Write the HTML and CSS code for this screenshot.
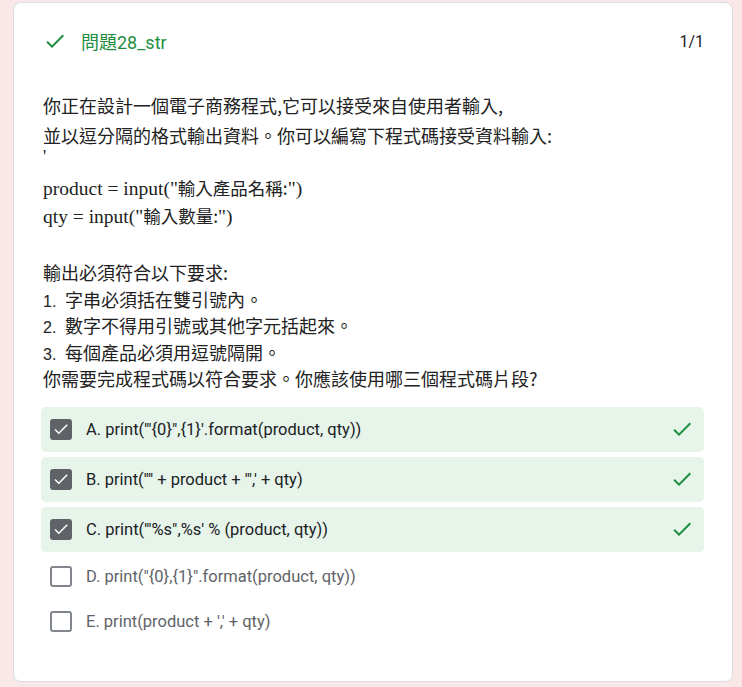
FILE: index.html
```html
<!DOCTYPE html>
<html lang="zh-Hant">
<head>
<meta charset="utf-8">
<link rel="stylesheet" href="styles.css">
</head>
<body>
<div class="card">
  <div class="header">
    <svg class="hcheck" viewBox="0 0 24 24" width="24" height="24"><path d="M9 16.17L4.83 12l-1.42 1.41L9 19 21 7l-1.41-1.41z" fill="#1e8e3e"/></svg>
    <div class="title">問題28_str</div>
    <div class="score">1/1</div>
  </div>
  <div class="question">
    <div class="l1">你正在設計一個電子商務程式,它可以接受來自使用者輸入,</div>
    <div class="l1">並以逗分隔的格式輸出資料。你可以編寫下程式碼接受資料輸入:</div>
    <div class="apos">'</div>
    <div class="code first">product = input("<span class="cjk">輸入產品名稱:</span>")</div>
    <div class="code">qty = input("<span class="cjk">輸入數量:</span>")</div>
    <div class="req first">輸出必須符合以下要求:</div>
    <div class="req"><span class="num">1.</span>字串必須括在雙引號內。</div>
    <div class="req"><span class="num">2.</span>數字不得用引號或其他字元括起來。</div>
    <div class="req"><span class="num">3.</span>每個產品必須用逗號隔開。</div>
    <div class="req">你需要完成程式碼以符合要求。你應該使用哪三個程式碼片段?</div>
  </div>
  <div class="options">
    <div class="opt correct">
      <span class="box checked"><svg viewBox="0 0 24 24" width="18" height="18"><path d="M9 16.17L4.83 12l-1.42 1.41L9 19 21 7l-1.41-1.41z" fill="#fff"/></svg></span>
      <span class="label">A. print('"{0}",{1}'.format(product, qty))</span>
      <svg class="ok" viewBox="0 0 24 24" width="24" height="24"><path d="M9 16.17L4.83 12l-1.42 1.41L9 19 21 7l-1.41-1.41z" fill="#1e8e3e"/></svg>
    </div>
    <div class="opt correct">
      <span class="box checked"><svg viewBox="0 0 24 24" width="18" height="18"><path d="M9 16.17L4.83 12l-1.42 1.41L9 19 21 7l-1.41-1.41z" fill="#fff"/></svg></span>
      <span class="label">B. print('"' + product + '",' + qty)</span>
      <svg class="ok" viewBox="0 0 24 24" width="24" height="24"><path d="M9 16.17L4.83 12l-1.42 1.41L9 19 21 7l-1.41-1.41z" fill="#1e8e3e"/></svg>
    </div>
    <div class="opt correct">
      <span class="box checked"><svg viewBox="0 0 24 24" width="18" height="18"><path d="M9 16.17L4.83 12l-1.42 1.41L9 19 21 7l-1.41-1.41z" fill="#fff"/></svg></span>
      <span class="label">C. print('"%s",%s' % (product, qty))</span>
      <svg class="ok" viewBox="0 0 24 24" width="24" height="24"><path d="M9 16.17L4.83 12l-1.42 1.41L9 19 21 7l-1.41-1.41z" fill="#1e8e3e"/></svg>
    </div>
    <div class="opt plain">
      <span class="box"></span>
      <span class="label">D. print("{0},{1}".format(product, qty))</span>
    </div>
    <div class="opt plain">
      <span class="box"></span>
      <span class="label">E. print(product + ',' + qty)</span>
    </div>
  </div>
</div>
</body>
</html>
```

FILE: styles.css
```css
html, body {
  margin: 0;
  padding: 0;
}
body {
  background: #fae8e8;
  font-family: Roboto, "Noto Sans CJK TC", sans-serif;
  color: #202124;
}
.card {
  box-sizing: border-box;
  margin: 2px 0 0 13px;
  width: 720px;
  height: 680px;
  background: #fff;
  border: 1px solid #dadce0;
  border-radius: 8px;
  padding: 20px 28px 0 27px;
}
.header {
  display: flex;
  align-items: center;
  height: 36px;
  padding-left: 2px;
}
.hcheck {
  flex: none;
}
.title {
  margin-left: 14px;
  font-size: 18px;
  color: #1e8e3e;
  flex: 1;
}
.score {
  font-size: 16px;
  color: #202124;
  margin-right: 0;
}
.question {
  margin-top: 31px;
  padding-left: 2px;
  font-family: "Noto Sans CJK TC", sans-serif;
  font-size: 18px;
  color: #222;
}
.l1 {
  line-height: 30px;
  height: 30px;
  white-space: nowrap;
}
.apos {
  line-height: 14px;
  height: 20px;
  font-family: "Liberation Serif", serif;
}
.code {
  font-family: "Liberation Serif", "Noto Sans CJK TC", serif;
  font-size: 19.5px;
  line-height: 28px;
  height: 28px;
}
.code.first {
  margin-top: 4px;
}
.cjk {
  font-family: "Noto Sans CJK TC", sans-serif;
  font-size: 17.5px;
}
.req {
  line-height: 26.5px;
  height: 26.5px;
  white-space: nowrap;
}
.req.first {
  margin-top: 29px;
}
.num {
  display: inline-block;
  width: 20px;
  margin-right: 2px;
  font-family: "Liberation Sans", sans-serif;
  font-size: 16px;
}
.options {
  margin-top: 15px;
  display: flex;
  flex-direction: column;
  gap: 5px;
}
.opt {
  display: flex;
  align-items: center;
  height: 45px;
  padding: 0 10px 0 9px;
  border-radius: 5px;
}
.opt.correct {
  background: #e6f4ea;
}
.opt.plain {
  height: 40px;
  color: #5f6368;
}
.box {
  box-sizing: border-box;
  flex: none;
  width: 22px;
  height: 21px;
  border-radius: 3px;
  border: 2px solid #80868b;
  display: flex;
  align-items: center;
  justify-content: center;
}
.box.checked {
  background: #5f6368;
  border-color: #5f6368;
}
.label {
  margin-left: 14px;
  font-size: 16.5px;
  flex: 1;
}
.ok {
  flex: none;
}
```
